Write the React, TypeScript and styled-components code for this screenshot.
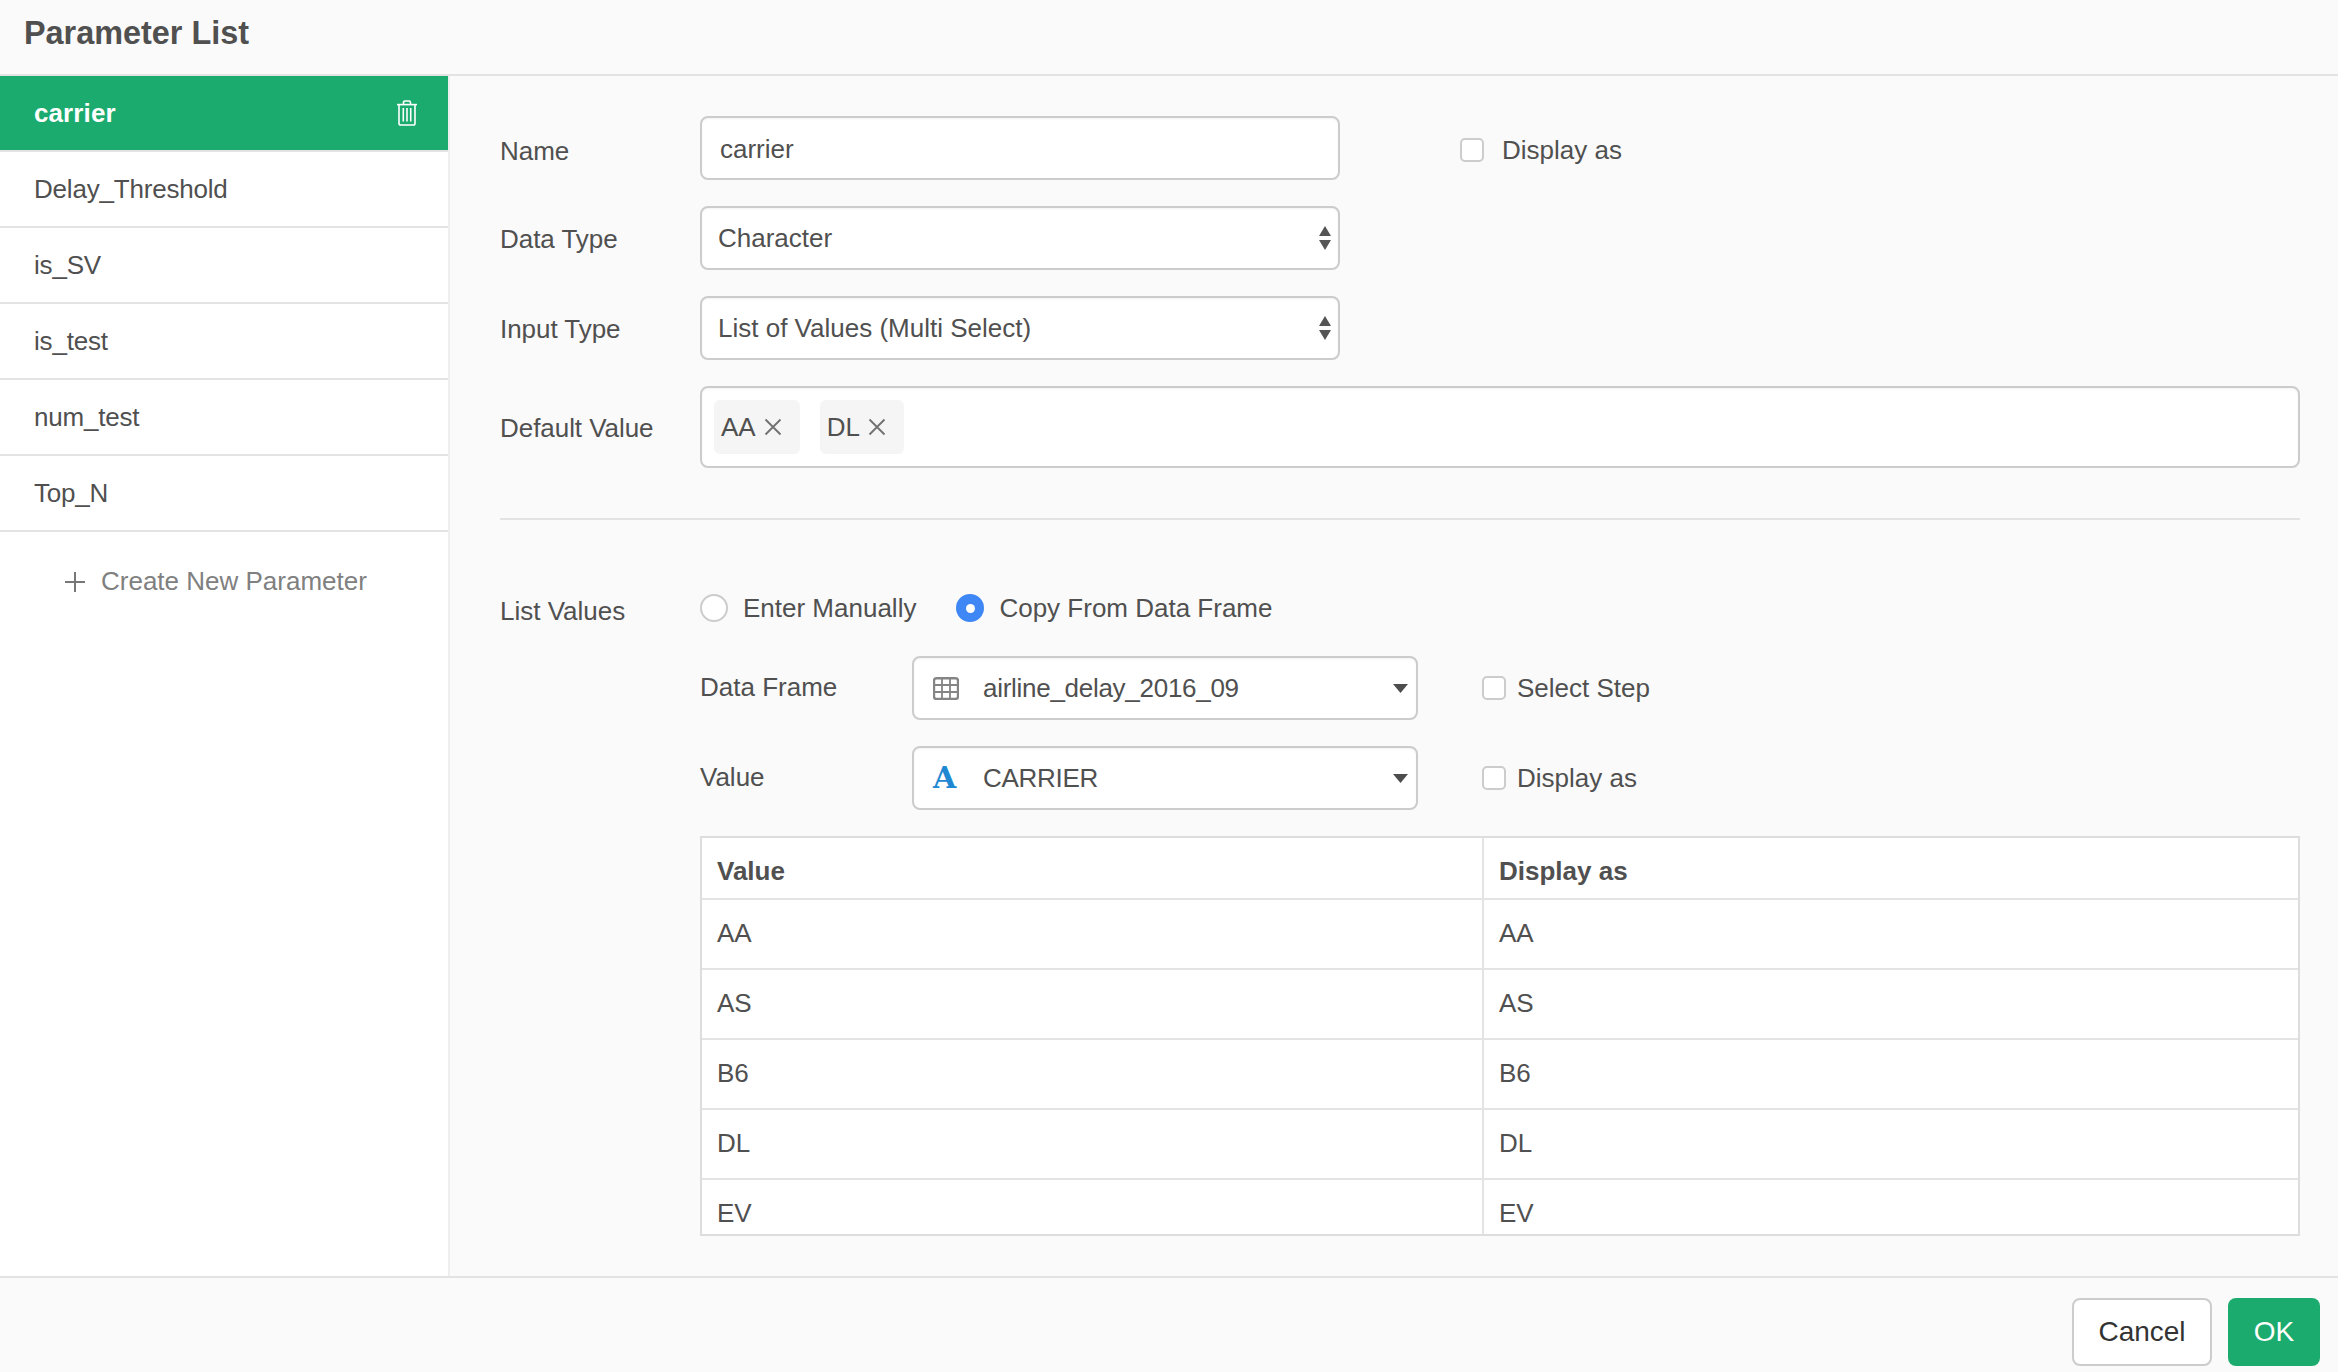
import styled, { createGlobalStyle } from "styled-components";

const GREEN = "#1cab6e";
const LINE = "#e3e3e3";
const FIELD_LINE = "#cccccc";
const TEXT = "#505050";

const parameters = ["carrier", "Delay_Threshold", "is_SV", "is_test", "num_test", "Top_N"];
const carriers = ["AA", "AS", "B6", "DL", "EV"];

const GlobalStyle = createGlobalStyle`
  html, body {
    margin: 0;
    padding: 0;
    background: #fafafa;
  }
  * {
    box-sizing: border-box;
  }
`;

function TrashIcon() {
  return (
    <svg width="20" height="26" viewBox="0 0 20 26" fill="none" stroke="#fff" strokeWidth="1.6">
      <path d="M6.5 4V2.4C6.5 1.6 7 1 8 1h4c1 0 1.5.6 1.5 1.4V4" />
      <path d="M0 4.6h20" />
      <path d="M2 4.6v18.6C2 24.3 2.7 25 3.8 25h12.4c1.1 0 1.8-.7 1.8-1.8V4.6" />
      <path d="M6.3 8v13.5M10 8v13.5M13.7 8v13.5" />
    </svg>
  );
}

function TableIcon() {
  return (
    <svg width="26" height="23" viewBox="0 0 26 23" fill="none" stroke="#858585">
      <rect x="1" y="1.2" width="24" height="20.8" rx="2.5" strokeWidth="2.4" />
      <path d="M1 8h24M1 15h24M9 2v20M17 2v20" strokeWidth="1.8" />
    </svg>
  );
}

function CloseIcon() {
  return (
    <svg width="18" height="18" viewBox="0 0 18 18" stroke="#707070" strokeWidth="1.8">
      <path d="M1.5 1.5l15 15M16.5 1.5l-15 15" />
    </svg>
  );
}

function PlusIcon() {
  return (
    <svg width="20" height="20" viewBox="0 0 20 20" stroke="#777" strokeWidth="2">
      <path d="M10 0v20M0 10h20" />
    </svg>
  );
}

function StepperIcon() {
  return (
    <svg width="12" height="24" viewBox="0 0 12 24" fill="#555">
      <path d="M6 0l6 10H0z" />
      <path d="M0 14h12L6 24z" />
    </svg>
  );
}

function CaretIcon() {
  return (
    <svg width="15" height="9" viewBox="0 0 15 9" fill="#4d4d4d">
      <path d="M0 0h15L7.5 9z" />
    </svg>
  );
}

export default function App() {
  return (
    <Dialog>
      <GlobalStyle />
      <Header>Parameter List</Header>
      <Body>
        <Sidebar>
          {parameters.map((name, i) => (
            <ParamItem key={name} $active={i === 0}>
              {name}
              {i === 0 && <TrashIcon />}
            </ParamItem>
          ))}
          <CreateRow>
            <PlusIcon />
            Create New Parameter
          </CreateRow>
        </Sidebar>
        <Main>
          <FormRow>
            <FieldLabel $drop={6}>Name</FieldLabel>
            <TextField>carrier</TextField>
            <TopCheck>
              <Checkbox />
              Display as
            </TopCheck>
          </FormRow>
          <FormRow>
            <FieldLabel>Data Type</FieldLabel>
            <NativeSelect>
              Character
              <StepperIcon />
            </NativeSelect>
          </FormRow>
          <FormRow>
            <FieldLabel>Input Type</FieldLabel>
            <NativeSelect>
              List of Values (Multi Select)
              <StepperIcon />
            </NativeSelect>
          </FormRow>
          <FormRow>
            <FieldLabel>Default Value</FieldLabel>
            <TagBox>
              <Tag>
                AA
                <CloseIcon />
              </Tag>
              <Tag>
                DL
                <CloseIcon />
              </Tag>
            </TagBox>
          </FormRow>
          <Divider />
          <ListValues>
            <ListLabel>List Values</ListLabel>
            <ListBody>
              <RadioRow>
                <RadioOption>
                  <Radio />
                  Enter Manually
                </RadioOption>
                <RadioOption>
                  <Radio $checked />
                  Copy From Data Frame
                </RadioOption>
              </RadioRow>
              <SourceRow>
                <SourceLabel>Data Frame</SourceLabel>
                <PickerSelect>
                  <PickerIcon>
                    <TableIcon />
                  </PickerIcon>
                  <PickerText>airline_delay_2016_09</PickerText>
                  <CaretIcon />
                </PickerSelect>
                <SourceCheck>
                  <Checkbox />
                  Select Step
                </SourceCheck>
              </SourceRow>
              <SourceRow>
                <SourceLabel>Value</SourceLabel>
                <PickerSelect>
                  <PickerIcon>
                    <TypeGlyph>A</TypeGlyph>
                  </PickerIcon>
                  <PickerText>CARRIER</PickerText>
                  <CaretIcon />
                </PickerSelect>
                <SourceCheck>
                  <Checkbox />
                  Display as
                </SourceCheck>
              </SourceRow>
              <ValueTable>
                <TableRow>
                  <HeadCell>Value</HeadCell>
                  <HeadCell>Display as</HeadCell>
                </TableRow>
                {carriers.map((code) => (
                  <TableRow key={code}>
                    <BodyCell>{code}</BodyCell>
                    <BodyCell>{code}</BodyCell>
                  </TableRow>
                ))}
              </ValueTable>
            </ListBody>
          </ListValues>
        </Main>
      </Body>
      <Footer>
        <CancelButton>Cancel</CancelButton>
        <OkButton>OK</OkButton>
      </Footer>
    </Dialog>
  );
}

const Dialog = styled.div`
  display: flex;
  flex-direction: column;
  width: 2338px;
  height: 1372px;
  overflow: hidden;
  background: #fafafa;
  color: ${TEXT};
  font-family: "Liberation Sans", Arial, sans-serif;
  font-size: 26px;
`;

const Header = styled.div`
  flex: none;
  height: 76px;
  padding: 13px 24px 0;
  border-bottom: 2px solid ${LINE};
  font-size: 32.4px;
  font-weight: 700;
  line-height: 40px;
`;

const Body = styled.div`
  flex: 1;
  display: flex;
  min-height: 0;
`;

const Sidebar = styled.div`
  flex: none;
  width: 450px;
  background: #fff;
  border-right: 2px solid #eeeeee;
`;

const ParamItem = styled.div<{ $active?: boolean }>`
  display: flex;
  align-items: center;
  justify-content: space-between;
  height: 76px;
  padding: 0 31px 0 34px;
  border-bottom: 2px solid ${LINE};
  background: ${(p) => (p.$active ? GREEN : "#fff")};
  color: ${(p) => (p.$active ? "#fff" : TEXT)};
  font-size: 26px;
  font-weight: ${(p) => (p.$active ? 700 : 400)};
  letter-spacing: ${(p) => (p.$active ? "0.1px" : "-0.2px")};
`;

const CreateRow = styled.div`
  display: flex;
  align-items: center;
  gap: 16px;
  padding: 34px 0 0 65px;
  color: #808080;
`;

const Main = styled.div`
  flex: 1;
  min-width: 0;
  display: flex;
  flex-direction: column;
  gap: 26px;
  padding: 40px 38px 0 50px;
`;

const FormRow = styled.div`
  display: flex;
  align-items: center;
`;

const FieldLabel = styled.div<{ $drop?: number }>`
  flex: none;
  width: 200px;
  padding-top: ${(p) => p.$drop ?? 3}px;
  letter-spacing: -0.05px;
`;

const Field = styled.div`
  flex: none;
  display: flex;
  align-items: center;
  height: 64px;
  background: #fff;
  border: 2px solid ${FIELD_LINE};
  border-radius: 8px;
  box-shadow: inset 0 1px 2px rgba(0, 0, 0, 0.05);
`;

const TextField = styled(Field)`
  width: 640px;
  padding: 3px 0 0 18px;
`;

const NativeSelect = styled(Field)`
  width: 640px;
  justify-content: space-between;
  padding: 0 7px 0 16px;
`;

const TagBox = styled(Field)`
  flex: 1;
  gap: 20px;
  height: 82px;
  padding: 0 0 0 12px;
`;

const Tag = styled.div`
  display: flex;
  align-items: center;
  gap: 8px;
  height: 54px;
  padding: 0 18px 0 7px;
  background: #f5f5f5;
  border-radius: 6px;
`;

const Checkbox = styled.span`
  flex: none;
  display: block;
  width: 24px;
  height: 24px;
  background: #fff;
  border: 2px solid ${FIELD_LINE};
  border-radius: 5px;
`;

const TopCheck = styled.label`
  display: flex;
  align-items: center;
  gap: 18px;
  margin-left: 120px;
  padding-top: 4px;
`;

const Divider = styled.div`
  height: 2px;
  margin-top: 24px;
  background: ${LINE};
`;

const ListValues = styled.div`
  display: flex;
  margin-top: 48px;
`;

const ListLabel = styled.div`
  flex: none;
  width: 200px;
  padding-top: 2px;
`;

const ListBody = styled.div`
  flex: 1;
  min-width: 0;
  display: flex;
  flex-direction: column;
  gap: 26px;
`;

const RadioRow = styled.div`
  display: flex;
  gap: 40px;
  height: 28px;
  margin-bottom: 8px;
`;

const RadioOption = styled.label`
  display: flex;
  align-items: center;
  gap: 15px;
`;

const Radio = styled.span<{ $checked?: boolean }>`
  flex: none;
  display: flex;
  align-items: center;
  justify-content: center;
  width: 28px;
  height: 28px;
  border-radius: 50%;
  background: ${(p) => (p.$checked ? "#3f87f5" : "#fff")};
  border: 2px solid ${(p) => (p.$checked ? "#3f87f5" : FIELD_LINE)};

  &::after {
    content: "";
    display: ${(p) => (p.$checked ? "block" : "none")};
    width: 9px;
    height: 9px;
    border-radius: 50%;
    background: #fff;
  }
`;

const SourceRow = styled.div`
  display: flex;
  align-items: center;
`;

const SourceLabel = styled.div`
  flex: none;
  width: 212px;
  padding-bottom: 1px;
`;

const PickerSelect = styled(Field)`
  width: 506px;
  padding: 0 8px 0 19px;
`;

const PickerIcon = styled.span`
  flex: none;
  display: flex;
  width: 50px;
`;

const TypeGlyph = styled.span`
  color: #1e88d2;
  font-family: "DejaVu Serif", "Liberation Serif", serif;
  font-size: 30px;
  font-weight: 700;
  line-height: 1;
`;

const PickerText = styled.span`
  flex: 1;
  letter-spacing: -0.28px;
`;

const SourceCheck = styled.label`
  display: flex;
  align-items: center;
  gap: 11px;
  margin-left: 64px;
`;

const ValueTable = styled.div`
  height: 400px;
  overflow: hidden;
  background: #fff;
  border: 2px solid #dddddd;
`;

const TableRow = styled.div`
  display: grid;
  grid-template-columns: 780px 1fr;
  border-bottom: 2px solid ${LINE};

  &:first-child > div {
    height: 60px;
    padding-top: 7px;
  }
`;

const Cell = styled.div`
  display: flex;
  align-items: center;
  height: 68px;
  padding: 0 0 1px 15px;

  & + & {
    border-left: 2px solid ${LINE};
  }
`;

const HeadCell = styled(Cell)`
  font-weight: 700;
`;

const BodyCell = styled(Cell)``;

const Footer = styled.div`
  flex: none;
  display: flex;
  justify-content: flex-end;
  gap: 16px;
  height: 96px;
  padding: 20px 18px 0 0;
  border-top: 2px solid ${LINE};
`;

const FooterButton = styled.button`
  height: 68px;
  border-radius: 8px;
  font-family: inherit;
  font-size: 28px;
`;

const CancelButton = styled(FooterButton)`
  width: 140px;
  background: #fff;
  border: 2px solid ${FIELD_LINE};
  color: #333;
`;

const OkButton = styled(FooterButton)`
  width: 92px;
  background: ${GREEN};
  border: 0;
  color: #fff;
`;
